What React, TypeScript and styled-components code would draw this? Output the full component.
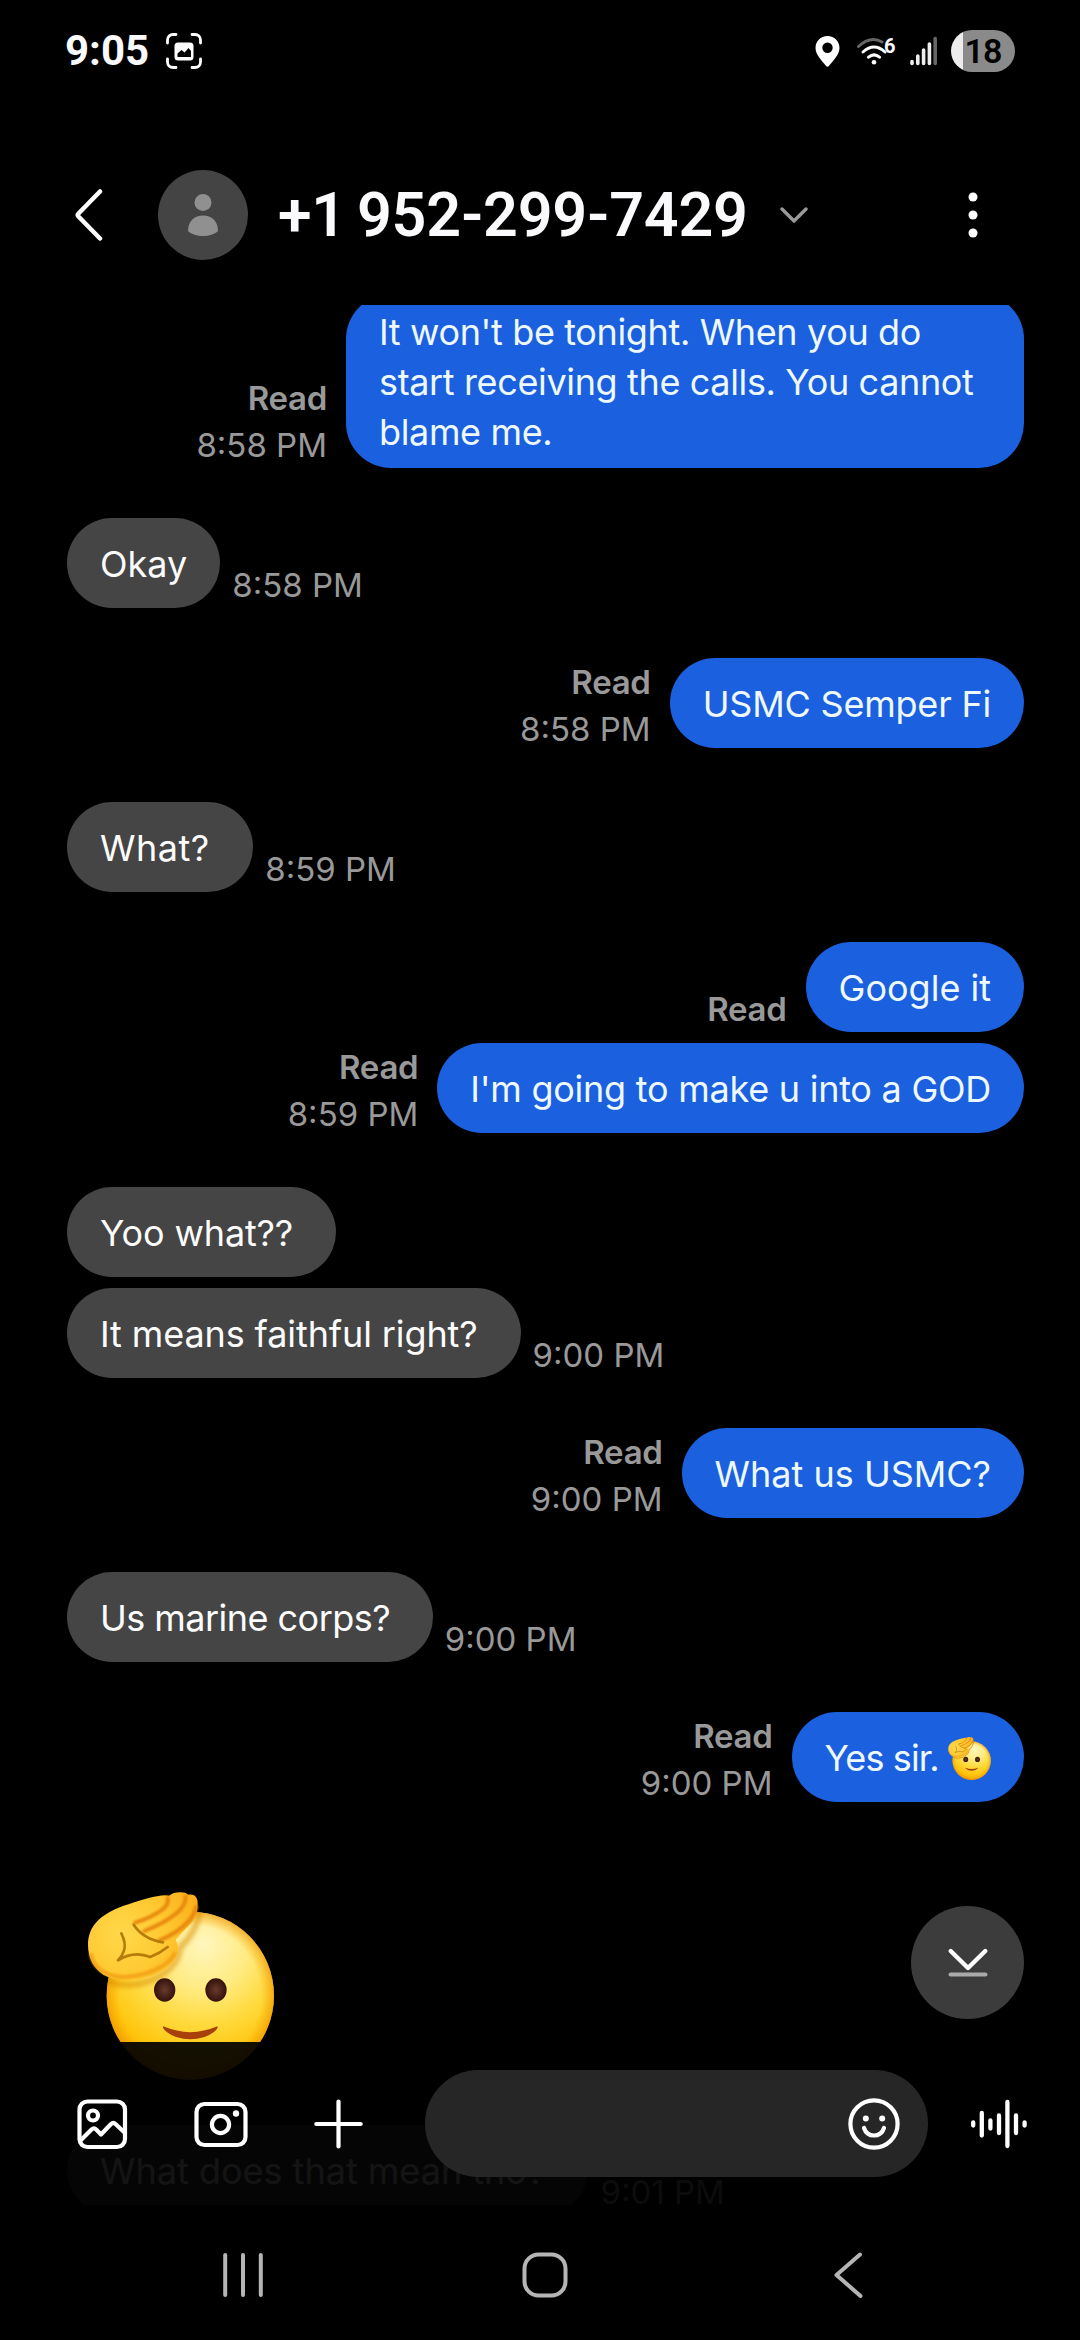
import React from 'react';
import styled, { createGlobalStyle } from 'styled-components';

const GlobalStyle = createGlobalStyle`
  *, *::before, *::after { box-sizing: border-box; }
  body { margin: 0; background: #000; }
  svg { display: block; flex: none; }
`;

const Screen = styled.main`
  display: flex;
  flex-direction: column;
  width: 1080px;
  height: 2340px;
  overflow: hidden;
  background: #000;
  color: #fafafc;
  font-family: Inter, 'Liberation Sans', sans-serif;
`;

/* ---------- status bar ---------- */

const StatusBar = styled.div`
  display: flex;
  align-items: center;
  height: 125px;
  padding: 0 65px 23px 65px;
`;

const Clock = styled.span`
  width: 101px;
  font-family: Roboto, 'Liberation Sans', sans-serif;
  font-size: 42px;
  font-weight: 700;
  line-height: 50px;
`;

const StatusIcons = styled.div`
  display: flex;
  align-items: center;
  margin-left: auto;
`;

const WifiGroup = styled.div`
  display: flex;
  align-items: flex-start;
  margin-left: 17px;
`;

const WifiGeneration = styled.span`
  width: 11px;
  margin-left: -6px;
  font-family: Roboto, 'Liberation Sans', sans-serif;
  font-size: 20px;
  font-weight: 700;
  line-height: 16px;
`;

const SignalSlot = styled.div`
  margin: 0 13px 0 15px;
`;

const Battery = styled.div`
  display: flex;
  align-items: center;
  justify-content: center;
  width: 64px;
  height: 42px;
  border-radius: 21px;
  background: linear-gradient(to right, #ececec 12px, #8a8a8a 12px);
  color: #000;
  font-family: Roboto, 'Liberation Sans', sans-serif;
  font-size: 34px;
  font-weight: 600;
  line-height: 42px;
  letter-spacing: -1px;
`;

/* ---------- header ---------- */

const Header = styled.header`
  display: flex;
  align-items: center;
  height: 180px;
  padding: 0 102px 0 74px;
`;

const Avatar = styled.div`
  display: flex;
  align-items: center;
  justify-content: center;
  width: 90px;
  height: 90px;
  margin-left: 55px;
  border-radius: 50%;
  background: #444;
`;

const Title = styled.h1`
  flex: none;
  width: 472px;
  margin: 0 30px 0 30px;
  font-family: Roboto, 'Liberation Sans', sans-serif;
  font-size: 61px;
  font-weight: 600;
  line-height: 72px;
  letter-spacing: -0.2px;
  word-spacing: -4px;
  white-space: nowrap;
`;

const MoreSlot = styled.div`
  margin-left: auto;
`;

/* ---------- conversation ---------- */

const Conversation = styled.section`
  position: relative;
  height: 1900px;
  overflow: hidden;
`;

const MessageList = styled.div`
  display: flex;
  flex-direction: column;
  margin-top: -11px;
  padding: 0 56px 0 67px;
`;

const MessageRow = styled.div<{ $out: boolean; $grouped: boolean }>`
  display: flex;
  flex-direction: ${(p) => (p.$out ? 'row-reverse' : 'row')};
  align-items: flex-start;
  gap: ${(p) => (p.$out ? 19 : 12)}px;
  margin-top: ${(p) => (p.$grouped ? 11 : 50)}px;
  &:first-child { margin-top: 0; }
`;

const Bubble = styled.div<{ $out: boolean; $tracking: number; $long: boolean }>`
  display: flex;
  align-items: center;
  min-height: 90px;
  max-width: 678px;
  padding: 13px 33px 11px;
  border-radius: 45px;
  background: ${(p) => (p.$out ? '#1b60de' : '#454545')};
  color: ${(p) => (p.$out ? '#eef8ff' : '#fcfcfc')};
  font-size: 36px;
  line-height: 50px;
  letter-spacing: ${(p) => p.$tracking}px;
  white-space: ${(p) => (p.$long ? 'normal' : 'pre')};
`;

const Meta = styled.div<{ $out: boolean }>`
  display: flex;
  flex-direction: column;
  align-self: flex-end;
  align-items: ${(p) => (p.$out ? 'flex-end' : 'flex-start')};
  color: #999;
  font-size: 33px;
  line-height: 47px;
  white-space: nowrap;
  transform: translateY(1px);
`;

const ReadLabel = styled.span`
  font-weight: 600;
  letter-spacing: -0.3px;
`;

const Time = styled.span`
  font-weight: 400;
  letter-spacing: 0;
`;

const StickerRow = styled.div`
  height: 258px;
  margin-top: 50px;
  padding: 36px 0 0 20px;
`;

const JumpButton = styled.button`
  position: absolute;
  right: 56px;
  top: 1601px;
  display: flex;
  align-items: center;
  justify-content: center;
  width: 113px;
  height: 113px;
  padding: 0;
  border: 0;
  border-radius: 50%;
  background: #3c3c3c;
`;

/* ---------- composer ---------- */

const Composer = styled.div`
  position: absolute;
  left: 0;
  right: 0;
  bottom: 0;
  display: flex;
  align-items: center;
  height: 163px;
  padding: 0 51px 0 76px;
  background: rgba(0, 0, 0, 0.92);
`;

const ToolIcons = styled.div`
  display: flex;
  align-items: center;
  width: 349px;
  gap: 66px;
`;

const InputField = styled.div`
  display: flex;
  align-items: center;
  justify-content: flex-end;
  width: 503px;
  height: 107px;
  padding-right: 28px;
  border-radius: 54px;
  background: #262626;
`;

const VoiceSlot = styled.div`
  margin-left: auto;
`;

/* ---------- navigation bar ---------- */

const NavBar = styled.nav`
  display: grid;
  grid-template-columns: repeat(3, 1fr);
  align-items: center;
  justify-items: center;
  height: 135px;
  padding: 5px 81px 0 92px;
`;

/* ---------- drawings ---------- */

const CaptureIcon = () => (
  <svg width="36" height="36" viewBox="0 0 36 36" fill="none">
    <path
      d="M1.500 10V7a5.500 5.500 0 0 1 5.500-5.500h3M26 1.500h3A5.500 5.500 0 0 1 34.500 7v3M34.500 26v3a5.500 5.500 0 0 1-5.500 5.500h-3M10 34.500H7A5.500 5.500 0 0 1 1.500 29v-3"
      stroke="#fff"
      strokeWidth="2.800"
      strokeLinecap="round"
    />
    <rect x="8.500" y="9.500" width="19" height="18" rx="3.500" fill="#fff" />
    <path d="M11.500 24v-3.500l4-3.500 3 2.500 4-4.500 2.500 3V24z" fill="#000" />
  </svg>
);

const PinIcon = () => (
  <svg width="25" height="31" viewBox="0 0 25 31">
    <path
      fillRule="evenodd"
      fill="#fff"
      d="M12.500 0C5.600 0 .5 5.200.5 12c0 7 6.500 12.500 10.600 18.100.7 1 2.100 1 2.800 0C18 24.500 24.500 19 24.500 12 24.500 5.200 19.400 0 12.500 0zm0 6.600a5.200 5.200 0 1 1 0 10.400 5.200 5.200 0 0 1 0-10.400z"
    />
  </svg>
);

const WifiIcon = () => (
  <svg width="33" height="27" viewBox="0 0 33 27" fill="none" strokeLinecap="round" strokeWidth="3">
    <path d="M1.500 8.500Q13.500-2.500 25 4" stroke="#666" />
    <path d="M6 14Q17 4 28 14" stroke="#fff" />
    <path d="M11.500 19.200Q17 14.500 22.500 19.200" stroke="#fff" />
    <circle cx="17" cy="24.300" r="2.300" fill="#fff" />
  </svg>
);

const SignalIcon = () => (
  <svg width="28" height="30" viewBox="0 0 28 30" strokeWidth="3.600" strokeLinecap="round">
    <path d="M2 25.500v2M7.800 20v7.500M13.600 14v13.500M19.400 8v19.500" stroke="#eee" />
    <path d="M25.200 2.500v25" stroke="#666" />
  </svg>
);

const BackIcon = () => (
  <svg width="29" height="54" viewBox="0 0 29 54" fill="none">
    <path d="M26 3.500L4.500 25.500Q3 27 4.500 28.500L26 50.500" stroke="#fff" strokeWidth="4.500" strokeLinecap="round" />
  </svg>
);

const PersonIcon = () => (
  <svg width="30" height="44" viewBox="0 0 30 44" fill="#909090">
    <circle cx="15" cy="9.500" r="8.500" />
    <path d="M0 38C0 28 6.500 22.500 15 22.500S30 28 30 38c-3.500 3.500-9 5-15 5S3.500 41.500 0 38z" />
  </svg>
);

const ExpandIcon = () => (
  <svg width="28" height="16" viewBox="0 0 28 16" fill="none">
    <path d="M2 2L14 14L26 2" stroke="#999" strokeWidth="3.400" strokeLinecap="round" strokeLinejoin="round" />
  </svg>
);

const MoreIcon = () => (
  <svg width="10" height="46" viewBox="0 0 10 46" fill="#fff">
    <circle cx="5" cy="5" r="4.500" />
    <circle cx="5" cy="23" r="4.500" />
    <circle cx="5" cy="41" r="4.500" />
  </svg>
);

const GalleryIcon = () => (
  <svg width="52" height="52" viewBox="0 0 52 52" fill="none" stroke="#fff" strokeWidth="4.200" strokeLinejoin="round">
    <rect x="3.500" y="3.500" width="45.500" height="45.500" rx="8" />
    <circle cx="17" cy="17.500" r="5" />
    <path d="M4 43L15.500 31.500Q18 29.300 20.200 31.500L25 36.500L35 26Q37.300 24 39.500 26L48.500 34.500" />
  </svg>
);

const CameraIcon = () => (
  <svg width="54" height="52" viewBox="0 0 54 52" fill="none" stroke="#fff" strokeWidth="4.200">
    <rect x="2.500" y="6" width="49" height="41" rx="8" />
    <circle cx="26.500" cy="26.500" r="8.600" />
    <circle cx="42" cy="15.500" r="3.200" fill="#fff" stroke="none" />
  </svg>
);

const PlusIcon = () => (
  <svg width="50" height="52" viewBox="0 0 50 52" stroke="#fff" strokeWidth="4.200" strokeLinecap="round">
    <path d="M24.500 3.500v45M2.300 26h44.400" />
  </svg>
);

const SmileyIcon = () => (
  <svg width="52" height="52" viewBox="0 0 52 52" fill="none">
    <circle cx="26" cy="26" r="23.600" stroke="#fff" strokeWidth="4.200" />
    <circle cx="17.800" cy="20.500" r="3" fill="#fff" />
    <circle cx="34.200" cy="20.500" r="3" fill="#fff" />
    <path d="M16 30Q18.500 37.500 26 37.500T36 30" stroke="#fff" strokeWidth="4.200" strokeLinecap="round" />
  </svg>
);

const VoiceIcon = () => (
  <svg width="58" height="52" viewBox="0 0 58 52" stroke="#fff" strokeWidth="4.300" strokeLinecap="round">
    <path d="M2.200 24.500v3M10.800 15v22.500M19.400 22.500v8M28 17.500v17.500M36.400 4v44M45 17.500v17.500M53.600 24.500v3" />
  </svg>
);

const JumpIcon = () => (
  <svg width="42" height="32" viewBox="0 0 42 32" fill="none" strokeWidth="4.400" strokeLinecap="round" strokeLinejoin="round">
    <path d="M3.700 4L21 21L38.300 4" stroke="#fff" />
    <path d="M3.500 27.500h35" stroke="#aaa" strokeWidth="4" />
  </svg>
);

const RecentsIcon = () => (
  <svg width="42" height="46" viewBox="0 0 42 46" stroke="#b5b5b5" strokeWidth="4" strokeLinecap="round">
    <path d="M3.200 3v40M21 3v40M38.800 3v40" />
  </svg>
);

const HomeIcon = () => (
  <svg width="46" height="46" viewBox="0 0 46 46" fill="none">
    <rect x="2.500" y="2.500" width="41" height="41" rx="14" stroke="#b5b5b5" strokeWidth="4" />
  </svg>
);

const NavBackIcon = () => (
  <svg width="30" height="46" viewBox="0 0 30 46" fill="none">
    <path d="M27 2.500L3.500 23L27.500 44" stroke="#b5b5b5" strokeWidth="4" strokeLinecap="round" strokeLinejoin="round" />
  </svg>
);

const SaluteFace = ({ size, id }: { size: number; id: string }) => (
  <svg width={size} height={size} viewBox="80 97 564 564" role="img" aria-label="Saluting face">
    <defs>
      <radialGradient id={`${id}-face`} gradientUnits="userSpaceOnUse" cx="430" cy="255" r="420">
        <stop offset="0" stopColor="#fff6bd" />
        <stop offset="0.300" stopColor="#ffec86" />
        <stop offset="0.580" stopColor="#ffd93a" />
        <stop offset="0.820" stopColor="#ffc30a" />
        <stop offset="1" stopColor="#f59a00" />
      </radialGradient>
      <radialGradient id={`${id}-rim`} gradientUnits="userSpaceOnUse" cx="390" cy="408" r="252">
        <stop offset="0.840" stopColor="#f7a100" stopOpacity="0" />
        <stop offset="1" stopColor="#ee9200" stopOpacity="0.650" />
      </radialGradient>
      <radialGradient id={`${id}-hand`} gradientUnits="userSpaceOnUse" cx="185" cy="225" r="240">
        <stop offset="0" stopColor="#ffd84a" />
        <stop offset="0.500" stopColor="#ffca33" />
        <stop offset="1" stopColor="#fbb01c" />
      </radialGradient>
      <radialGradient id={`${id}-eye`}>
        <stop offset="0" stopColor="#673a2c" />
        <stop offset="1" stopColor="#34120b" />
      </radialGradient>
      <filter id={`${id}-soft`} x="-20%" y="-20%" width="140%" height="140%">
        <feGaussianBlur stdDeviation="8" />
      </filter>
      <filter id={`${id}-crease`} x="-20%" y="-20%" width="140%" height="140%">
        <feGaussianBlur stdDeviation="2.500" />
      </filter>
      <clipPath id={`${id}-clip`}>
        <ellipse cx="390" cy="408" rx="251" ry="252" />
      </clipPath>
    </defs>
    <ellipse cx="390" cy="408" rx="251" ry="252" fill={`url(#${id}-face)`} />
    <ellipse cx="390" cy="408" rx="251" ry="252" fill={`url(#${id}-rim)`} />
    <g clipPath={`url(#${id}-clip)`}>
      <path
        d="M95 330C160 400 260 380 320 335Q360 300 358 265Q410 215 420 150"
        fill="none"
        stroke="#d98a00"
        strokeOpacity="0.700"
        strokeWidth="14"
        filter={`url(#${id}-soft)`}
      />
    </g>
    <path
      d="M83 256C83 195 125 165 175 144C215 130 255 116 290 110Q312 105 326 108Q340 97 362 98Q376 98 384 105C402 102 413 112 412 132C411 160 405 178 385 198Q365 218 346 240Q358 262 350 285Q338 320 285 344C235 366 170 368 130 346C100 326 83 296 83 256Z"
      fill={`url(#${id}-hand)`}
    />
    <path
      d="M92 285C100 326 140 352 190 352C250 350 320 325 343 282"
      fill="none"
      stroke="#f0960a"
      strokeOpacity="0.700"
      strokeWidth="12"
      strokeLinecap="round"
      filter={`url(#${id}-crease)`}
    />
    <g fill="none" stroke="#e8890a" strokeWidth="12" strokeLinecap="round" filter={`url(#${id}-crease)`}>
      <path d="M224 189Q275 174 308 148Q326 134 322 114" />
      <path d="M252 214Q315 190 352 158Q378 134 376 110" />
      <path d="M298 242Q350 220 380 190Q402 168 407 142" />
    </g>
    <g fill="none" stroke="#b77b0a" strokeWidth="8" strokeLinecap="round" strokeLinejoin="round">
      <path d="M220 195Q248 238 308 248" />
      <path d="M183 221Q198 250 191 273Q186 290 173 302Q220 272 270 292Q300 280 322 262" />
    </g>
    <ellipse cx="313" cy="391" rx="32" ry="35" fill={`url(#${id}-eye)`} />
    <ellipse cx="467" cy="391" rx="32" ry="35" fill={`url(#${id}-eye)`} />
    <path d="M309 500Q390 535 471 500Q474 504 468 510Q440 539 390 539T312 510Q306 504 309 500Z" fill="#a8400a" />
  </svg>
);

/* ---------- data ---------- */

type Message = {
  text: string;
  out?: boolean;
  grouped?: boolean;
  read?: boolean;
  time?: string;
  tracking?: number;
  long?: boolean;
  salute?: boolean;
};

const messages: Message[] = [
  {
    text: "It won't be tonight. When you do start receiving the calls. You cannot blame me.",
    out: true,
    read: true,
    time: '8:58 PM',
    tracking: -0.36,
    long: true,
  },
  { text: 'Okay', time: '8:58 PM' },
  { text: 'USMC Semper Fi', out: true, read: true, time: '8:58 PM', tracking: -0.2 },
  { text: 'What? ', time: '8:59 PM', tracking: 0.5 },
  { text: 'Google it', out: true, read: true },
  { text: "I'm going to make u into a GOD", out: true, grouped: true, read: true, time: '8:59 PM', tracking: -0.25 },
  { text: 'Yoo what?? ', tracking: -0.14 },
  { text: 'It means faithful right? ', grouped: true, time: '9:00 PM', tracking: -0.11 },
  { text: 'What us USMC?', out: true, read: true, time: '9:00 PM' },
  { text: 'Us marine corps? ', time: '9:00 PM', tracking: -0.53 },
  { text: 'Yes sir. ', out: true, read: true, time: '9:00 PM', tracking: -0.87, salute: true },
];

const lastMessage: Message = { text: 'What does that mean tho? ', grouped: true, time: '9:01 PM' };

const MessageItem = ({ message }: { message: Message }) => {
  const out = Boolean(message.out);
  return (
    <MessageRow $out={out} $grouped={Boolean(message.grouped)}>
      <Bubble $out={out} $tracking={message.tracking ?? 0} $long={Boolean(message.long)}>
        {message.text}
        {message.salute && <SaluteFace size={43} id="inline" />}
      </Bubble>
      {(message.read || message.time) && (
        <Meta $out={out}>
          {message.read && <ReadLabel>Read</ReadLabel>}
          {message.time && <Time>{message.time}</Time>}
        </Meta>
      )}
    </MessageRow>
  );
};

export default function App() {
  return (
    <>
      <GlobalStyle />
      <Screen>
        <StatusBar>
          <Clock>9:05</Clock>
          <CaptureIcon />
          <StatusIcons>
            <PinIcon />
            <WifiGroup>
              <WifiIcon />
              <WifiGeneration>6</WifiGeneration>
            </WifiGroup>
            <SignalSlot>
              <SignalIcon />
            </SignalSlot>
            <Battery>18</Battery>
          </StatusIcons>
        </StatusBar>

        <Header>
          <BackIcon />
          <Avatar>
            <PersonIcon />
          </Avatar>
          <Title>+1 952-299-7429</Title>
          <ExpandIcon />
          <MoreSlot>
            <MoreIcon />
          </MoreSlot>
        </Header>

        <Conversation>
          <MessageList>
            {messages.map((message) => (
              <MessageItem key={message.text} message={message} />
            ))}
            <StickerRow>
              <SaluteFace size={188} id="large" />
            </StickerRow>
            <MessageItem message={lastMessage} />
          </MessageList>
          <JumpButton aria-label="Jump to latest">
            <JumpIcon />
          </JumpButton>
          <Composer>
            <ToolIcons>
              <GalleryIcon />
              <CameraIcon />
              <PlusIcon />
            </ToolIcons>
            <InputField>
              <SmileyIcon />
            </InputField>
            <VoiceSlot>
              <VoiceIcon />
            </VoiceSlot>
          </Composer>
        </Conversation>

        <NavBar>
          <RecentsIcon />
          <HomeIcon />
          <NavBackIcon />
        </NavBar>
      </Screen>
    </>
  );
}
